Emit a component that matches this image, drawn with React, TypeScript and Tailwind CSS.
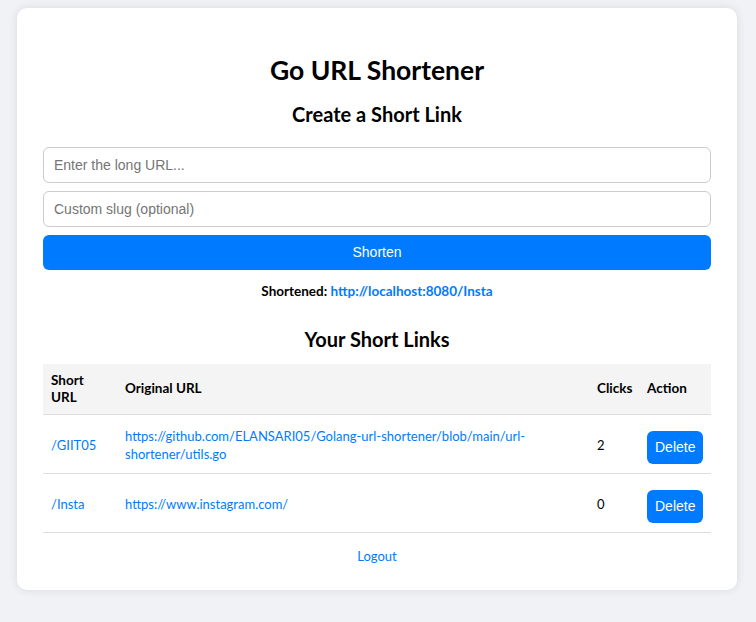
import React from 'react';

const links = [
  {
    slug: '/GIIT05',
    url: 'https://github.com/ELANSARI05/Golang-url-shortener/blob/main/url-shortener/utils.go',
    clicks: 2,
  },
  { slug: '/Insta', url: 'https://www.instagram.com/', clicks: 0 },
];

const sans = "font-['Lato','Open_Sans',sans-serif]";
const arial = "font-['Liberation_Sans',Arial,sans-serif]";

export default function App() {
  return (
    <div className={`min-h-screen bg-[#f0f2f5] pt-[8px] pb-[33px] ${sans}`}>
      <div className="ml-[17px] w-[720px] rounded-[10px] bg-white px-[26px] pt-[46px] pb-[24px] shadow-[0_0_10px_rgba(0,0,0,0.1)]">
        {/* Heading */}
        <h1 className="text-center text-[26.5px] font-bold leading-[32px] text-black">Go URL Shortener</h1>
        <h2 className="mt-[15px] text-center text-[20px] font-bold leading-[26px] text-black">Create a Short Link</h2>

        {/* Form */}
        <div className="mt-[20px] flex flex-col gap-[8px]">
          <input
            type="text"
            placeholder="Enter the long URL..."
            className={`h-[36px] w-full rounded-[6px] border border-[#ccc] px-[10px] text-[14px] placeholder:text-[#757575] focus:outline-none ${arial}`}
          />
          <input
            type="text"
            placeholder="Custom slug (optional)"
            className={`h-[36px] w-full rounded-[6px] border border-[#ccc] px-[10px] text-[14px] placeholder:text-[#757575] focus:outline-none ${arial}`}
          />
          <button className={`h-[35px] w-full rounded-[6px] bg-[#007bff] text-[14px] text-white ${arial}`}>
            Shorten
          </button>
        </div>

        <p className="mt-[11px] text-center text-[13.5px] font-bold leading-[20px] text-black">
          Shortened: <a href="#" className="text-[#007bff]">http://localhost:8080/Insta</a>
        </p>

        <h2 className="mt-[25px] text-center text-[20px] font-bold leading-[26px] text-black">Your Short Links</h2>

        {/* Links table */}
        <table className="mt-[12px] w-full table-fixed border-collapse text-left text-[13px]">
          <colgroup>
            <col className="w-[74px]" />
            <col />
            <col className="w-[50px]" />
            <col className="w-[72px]" />
          </colgroup>
          <thead>
            <tr className="h-[50px] bg-[#f4f4f4] text-[13.5px]">
              <th className="border-b border-[#ddd] px-[8px] leading-[17px] font-bold">Short URL</th>
              <th className="border-b border-[#ddd] px-[8px] leading-[17px] font-bold">Original URL</th>
              <th className="border-b border-[#ddd] px-[8px] leading-[17px] font-bold">Clicks</th>
              <th className="border-b border-[#ddd] px-[8px] leading-[17px] font-bold">Action</th>
            </tr>
          </thead>
          <tbody>
            {links.map((l) => (
              <tr key={l.slug} className="h-[59px]">
                <td className="border-b border-[#ddd] px-[8px] pt-[3px] leading-[18px]">
                  <a href="#" className="text-[#007bff]">{l.slug}</a>
                </td>
                <td className="border-b border-[#ddd] px-[8px] pt-[3px] leading-[18px]">
                  <a href="#" className="text-[#007bff]">{l.url}</a>
                </td>
                <td className="border-b border-[#ddd] px-[8px] pt-[3px] leading-[18px] text-black">{l.clicks}</td>
                <td className="border-b border-[#ddd] px-[8px] pt-[8px] pb-0">
                  <button className={`h-[33px] rounded-[6px] bg-[#007bff] px-[8px] text-[14px] text-white ${arial}`}>
                    Delete
                  </button>
                </td>
              </tr>
            ))}
          </tbody>
        </table>

        <div className="mt-[13px] text-center text-[13px] leading-[20px]">
          <a href="#" className="text-[#007bff]">Logout</a>
        </div>
      </div>
    </div>
  );
}
